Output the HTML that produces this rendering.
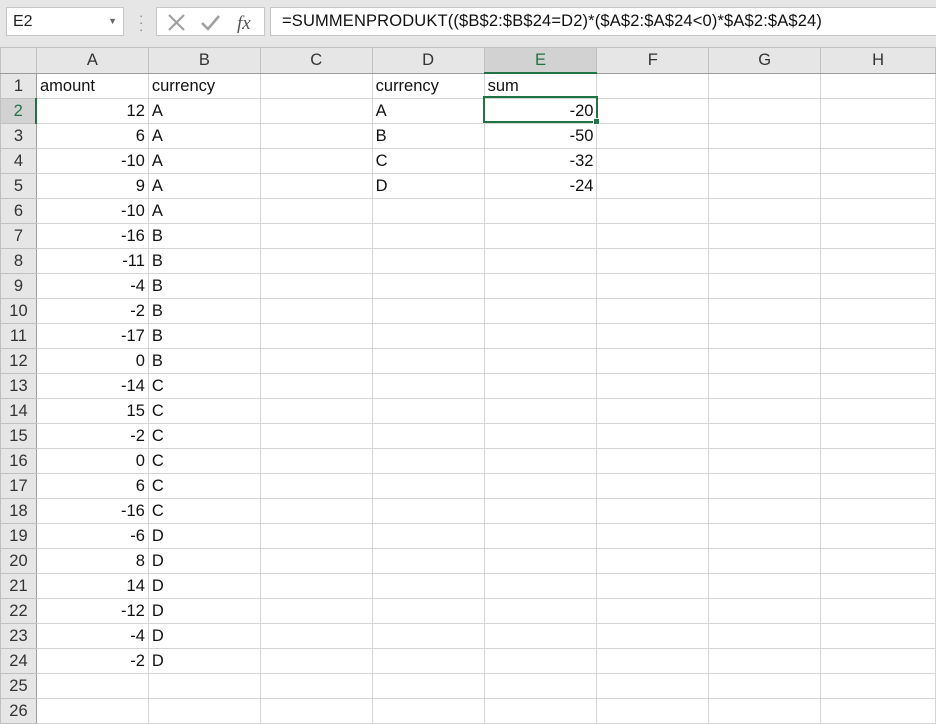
<!DOCTYPE html>
<html><head><meta charset="utf-8"><style>
body{margin:0;width:936px;height:724px;overflow:hidden;background:#fff;font-family:"Liberation Sans",sans-serif;position:relative}
.top{position:absolute;left:0;top:0;width:936px;height:48px;background:#e6e6e6}
.nb{position:absolute;left:6px;top:7px;width:118px;height:29px;background:#fff;border:1px solid #c6c6c6;box-sizing:border-box;font-size:16px;line-height:27px;padding-left:6px;color:#222}
.nb span{position:absolute;right:6px;top:0;font-size:9px;color:#666}
.dots{position:absolute;left:139px;top:12px;font-size:13px;color:#777;line-height:7px}
.ib{position:absolute;left:156px;top:7px;width:109px;height:29px;background:#fff;border:1px solid #c6c6c6;box-sizing:border-box}
.fb{position:absolute;left:270px;top:7px;width:666px;height:29px;background:#fff;border:1px solid #c6c6c6;border-right:none;box-sizing:border-box;font-size:16.5px;line-height:27px;padding-left:11px;color:#111;white-space:nowrap;letter-spacing:0.15px}
table{position:absolute;left:0;top:47px;border-collapse:collapse;table-layout:fixed;font-size:16.5px}
td{height:24px;border:1px solid #d4d4d4;padding:0 3px;white-space:nowrap;overflow:hidden;color:#111;line-height:24px}
tr.h td{background:#e6e6e6;text-align:center;color:#333;border-color:#c0c0c0;border-bottom:1px solid #9b9b9b}
td.r{background:#e6e6e6;text-align:center;color:#333;border-color:#c0c0c0;border-right:1px solid #9b9b9b;padding:0}
.n{text-align:right}
td.se{background:#d2d2d2!important;color:#217346!important;border-bottom:2px solid #217346!important}
td.sr{background:#d2d2d2!important;color:#217346!important;border-right:2px solid #217346!important}
.sel{position:absolute;left:483px;top:96px;width:115px;height:27px;border:2px solid #217346;box-sizing:border-box}
.sel i{position:absolute;right:-4px;bottom:-4px;width:5px;height:5px;background:#217346;border:1px solid #fff}
</style></head><body>
<div class="top">
<div class="nb">E2<span>▼</span></div>
<div class="dots">·<br>·<br>·</div>
<div class="ib">
<svg width="109" height="29" style="position:absolute;left:0;top:0">
<path d="M12 7 L27 22 M27 7 L12 22" stroke="#a0a0a0" stroke-width="2.2" fill="none"/>
<path d="M45 15 L51 21 L62 8" stroke="#a0a0a0" stroke-width="2.6" fill="none"/>
<text x="80" y="21" font-family="Liberation Serif" font-style="italic" font-size="19" fill="#555">fx</text>
</svg></div>
<div class="fb">=SUMMENPRODUKT(($B$2:$B$24=D2)*($A$2:$A$24&lt;0)*$A$2:$A$24)</div>
</div>
<table>
<colgroup><col style="width:36px"><col style="width:112px"><col style="width:112px"><col style="width:112px"><col style="width:112px"><col style="width:113px"><col style="width:112px"><col style="width:112px"><col style="width:115px"></colgroup>
<tr class="h"><td style="background:#e6e6e6"></td><td>A</td><td>B</td><td>C</td><td>D</td><td class="se">E</td><td>F</td><td>G</td><td>H</td></tr>
<tr><td class="r">1</td><td>amount</td><td>currency</td><td></td><td>currency</td><td>sum</td><td></td><td></td><td></td></tr>
<tr><td class="r sr">2</td><td class="n">12</td><td>A</td><td></td><td>A</td><td class="n">-20</td><td></td><td></td><td></td></tr>
<tr><td class="r">3</td><td class="n">6</td><td>A</td><td></td><td>B</td><td class="n">-50</td><td></td><td></td><td></td></tr>
<tr><td class="r">4</td><td class="n">-10</td><td>A</td><td></td><td>C</td><td class="n">-32</td><td></td><td></td><td></td></tr>
<tr><td class="r">5</td><td class="n">9</td><td>A</td><td></td><td>D</td><td class="n">-24</td><td></td><td></td><td></td></tr>
<tr><td class="r">6</td><td class="n">-10</td><td>A</td><td></td><td></td><td></td><td></td><td></td><td></td></tr>
<tr><td class="r">7</td><td class="n">-16</td><td>B</td><td></td><td></td><td></td><td></td><td></td><td></td></tr>
<tr><td class="r">8</td><td class="n">-11</td><td>B</td><td></td><td></td><td></td><td></td><td></td><td></td></tr>
<tr><td class="r">9</td><td class="n">-4</td><td>B</td><td></td><td></td><td></td><td></td><td></td><td></td></tr>
<tr><td class="r">10</td><td class="n">-2</td><td>B</td><td></td><td></td><td></td><td></td><td></td><td></td></tr>
<tr><td class="r">11</td><td class="n">-17</td><td>B</td><td></td><td></td><td></td><td></td><td></td><td></td></tr>
<tr><td class="r">12</td><td class="n">0</td><td>B</td><td></td><td></td><td></td><td></td><td></td><td></td></tr>
<tr><td class="r">13</td><td class="n">-14</td><td>C</td><td></td><td></td><td></td><td></td><td></td><td></td></tr>
<tr><td class="r">14</td><td class="n">15</td><td>C</td><td></td><td></td><td></td><td></td><td></td><td></td></tr>
<tr><td class="r">15</td><td class="n">-2</td><td>C</td><td></td><td></td><td></td><td></td><td></td><td></td></tr>
<tr><td class="r">16</td><td class="n">0</td><td>C</td><td></td><td></td><td></td><td></td><td></td><td></td></tr>
<tr><td class="r">17</td><td class="n">6</td><td>C</td><td></td><td></td><td></td><td></td><td></td><td></td></tr>
<tr><td class="r">18</td><td class="n">-16</td><td>C</td><td></td><td></td><td></td><td></td><td></td><td></td></tr>
<tr><td class="r">19</td><td class="n">-6</td><td>D</td><td></td><td></td><td></td><td></td><td></td><td></td></tr>
<tr><td class="r">20</td><td class="n">8</td><td>D</td><td></td><td></td><td></td><td></td><td></td><td></td></tr>
<tr><td class="r">21</td><td class="n">14</td><td>D</td><td></td><td></td><td></td><td></td><td></td><td></td></tr>
<tr><td class="r">22</td><td class="n">-12</td><td>D</td><td></td><td></td><td></td><td></td><td></td><td></td></tr>
<tr><td class="r">23</td><td class="n">-4</td><td>D</td><td></td><td></td><td></td><td></td><td></td><td></td></tr>
<tr><td class="r">24</td><td class="n">-2</td><td>D</td><td></td><td></td><td></td><td></td><td></td><td></td></tr>
<tr><td class="r">25</td><td></td><td></td><td></td><td></td><td></td><td></td><td></td><td></td></tr>
<tr><td class="r">26</td><td></td><td></td><td></td><td></td><td></td><td></td><td></td><td></td></tr>
</table>
<div class="sel"><i></i></div>
</body></html>
